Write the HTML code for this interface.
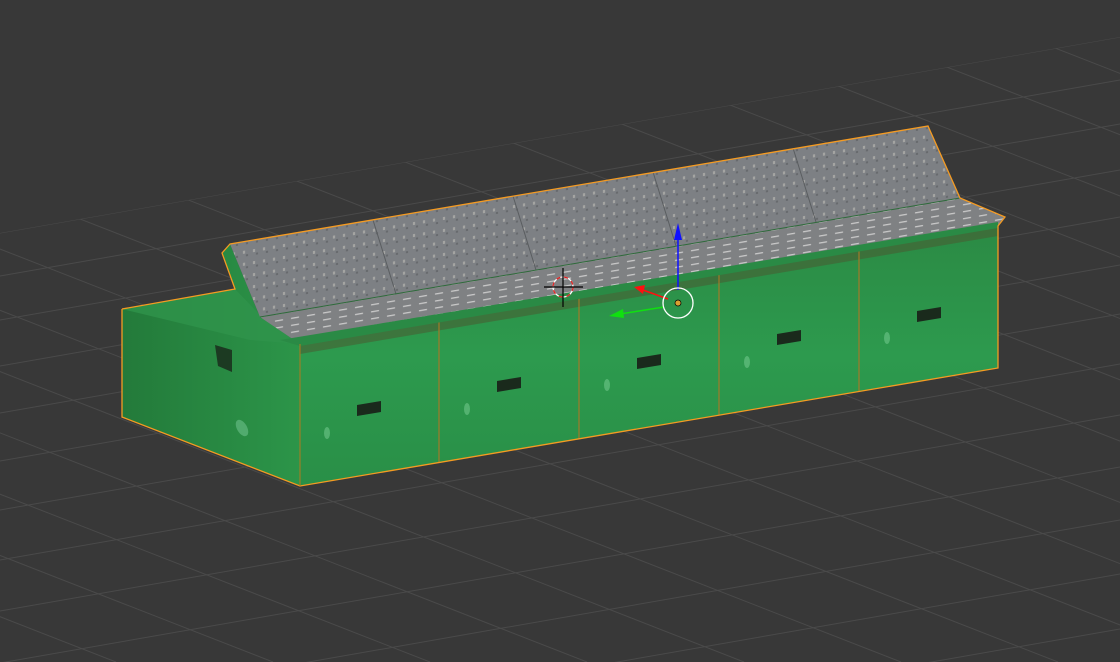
<!DOCTYPE html>
<html><head><style>
html,body{margin:0;padding:0;background:#383838;overflow:hidden;width:1120px;height:662px}
svg{display:block}
</style></head><body>
<svg width="1120" height="662" viewBox="0 0 1120 662" xmlns="http://www.w3.org/2000/svg">
<defs>
<linearGradient id="gf" x1="0" y1="0" x2="0" y2="1">
<stop offset="0" stop-color="#2b8a44"/><stop offset="0.5" stop-color="#2d9a4e"/><stop offset="1" stop-color="#298f47"/>
</linearGradient>
<linearGradient id="gl" x1="0" y1="0" x2="1" y2="0">
<stop offset="0" stop-color="#237a3a"/><stop offset="1" stop-color="#2c9549"/>
</linearGradient>
<pattern id="knobs" width="10" height="12" patternUnits="userSpaceOnUse" patternTransform="skewY(-9.6)">
<rect width="10" height="12" fill="#7d8084"/>
<rect x="3" y="4" width="2" height="3" fill="#a9a9a6"/>
<rect x="6" y="8" width="2" height="2" fill="#65686b"/>
</pattern>
<pattern id="keys" width="16" height="7" patternUnits="userSpaceOnUse" patternTransform="skewY(-9.6)">
<rect width="16" height="7" fill="#7f8183"/>
<rect x="3" y="3" width="8" height="1.3" fill="#c9c9c9"/>
</pattern>
<clipPath id="gc"><polygon points="0,233 1120,37 1120,662 0,662"/></clipPath>
</defs>
<rect width="1120" height="662" fill="#383838"/>
<g stroke="#4a4a4a" stroke-width="1" clip-path="url(#gc)">
<line x1="0" y1="233" x2="1120" y2="37"/>
<line x1="0" y1="276" x2="1120" y2="80"/>
<line x1="0" y1="320" x2="1120" y2="124"/>
<line x1="0" y1="366" x2="1120" y2="170"/>
<line x1="0" y1="413" x2="1120" y2="217"/>
<line x1="0" y1="461" x2="1120" y2="265"/>
<line x1="0" y1="510" x2="1120" y2="314"/>
<line x1="0" y1="560" x2="1120" y2="364"/>
<line x1="0" y1="611" x2="1120" y2="415"/>
<line x1="0" y1="663" x2="1120" y2="467"/>
<line x1="0" y1="716" x2="1120" y2="520"/>
<line x1="0" y1="770" x2="1120" y2="574"/>
<line x1="0" y1="825" x2="1120" y2="629"/>
<line x1="0" y1="880" x2="1120" y2="684"/>
<line x1="-1737" y1="0" x2="-41" y2="662"/>
<line x1="-1580" y1="0" x2="116" y2="662"/>
<line x1="-1423" y1="0" x2="273" y2="662"/>
<line x1="-1266" y1="0" x2="430" y2="662"/>
<line x1="-1109" y1="0" x2="587" y2="662"/>
<line x1="-952" y1="0" x2="744" y2="662"/>
<line x1="-795" y1="0" x2="901" y2="662"/>
<line x1="-638" y1="0" x2="1058" y2="662"/>
<line x1="-481" y1="0" x2="1215" y2="662"/>
<line x1="-324" y1="0" x2="1372" y2="662"/>
<line x1="-167" y1="0" x2="1529" y2="662"/>
<line x1="-10" y1="0" x2="1686" y2="662"/>
<line x1="147" y1="0" x2="1843" y2="662"/>
<line x1="304" y1="0" x2="2000" y2="662"/>
<line x1="461" y1="0" x2="2157" y2="662"/>
<line x1="618" y1="0" x2="2314" y2="662"/>
<line x1="775" y1="0" x2="2471" y2="662"/>
<line x1="932" y1="0" x2="2628" y2="662"/>
<line x1="1089" y1="0" x2="2785" y2="662"/>
</g>
<!-- left end face -->
<polygon points="122,309 235,289 222,253 230,244 260,317 300,344 300,486 122,417" fill="url(#gl)"/>
<polygon points="122,309 235,289 262,317 300,344 250,340" fill="#2f944b" opacity="0.8"/>
<polygon points="215,345 232,350 232,372 218,366" fill="#1c3a22"/>
<ellipse cx="242" cy="428" rx="5" ry="9" fill="#6cc08a" opacity="0.6" transform="rotate(-30 242 428)"/>
<!-- front face -->
<polygon points="300,344 998,226 998,368 300,486" fill="url(#gf)"/>
<polygon points="300,344 998,226 998,236 300,354" fill="#4a5a32" opacity="0.55"/>
<g stroke="#a07a2a" stroke-width="1.2">
<line x1="439" y1="321" x2="439" y2="462"/>
<line x1="579" y1="297" x2="579" y2="439"/>
<line x1="719" y1="273" x2="719" y2="415"/>
<line x1="859" y1="250" x2="859" y2="391"/>
</g>
<g fill="#1a2a1c">
<polygon points="357,405 381,401 381,412 357,416"/>
<polygon points="497,381 521,377 521,388 497,392"/>
<polygon points="637,358 661,354 661,365 637,369"/>
<polygon points="777,334 801,330 801,341 777,345"/>
<polygon points="917,311 941,307 941,318 917,322"/>
</g>
<g fill="#7ccf96" opacity="0.5">
<ellipse cx="327" cy="433" rx="3" ry="6"/><ellipse cx="467" cy="409" rx="3" ry="6"/><ellipse cx="607" cy="385" rx="3" ry="6"/><ellipse cx="747" cy="362" rx="3" ry="6"/><ellipse cx="887" cy="338" rx="3" ry="6"/>
</g>
<!-- keyboard strip -->
<polygon points="260,317 960,198 1005,217 998,226 300,344" fill="url(#keys)"/>
<polygon points="280,340 998,222 998,228 300,346" fill="#2a8a45"/>
<!-- upper panel -->
<polygon points="230,244 928,126 960,198 260,317" fill="url(#knobs)"/>
<g stroke="#5a5d60" stroke-width="1">
<line x1="373" y1="220" x2="396" y2="294"/>
<line x1="513" y1="196" x2="536" y2="270"/>
<line x1="653" y1="172" x2="676" y2="246"/>
<line x1="793" y1="148" x2="816" y2="222"/>
</g>
<line x1="260" y1="317" x2="960" y2="198" stroke="#2e6a3a" stroke-width="1"/>
<!-- outline -->
<polyline points="122,309 235,289 222,253 230,244 928,126 960,198 1005,217 998,226 998,368 300,486 122,417 122,309" fill="none" stroke="#f59b22" stroke-width="1.3"/>
<line x1="300" y1="344" x2="300" y2="486" stroke="#b07a20" stroke-width="1"/>
<!-- 3D cursor -->
<g>
<circle cx="563" cy="287" r="10" fill="none" stroke="#fff" stroke-width="1.3"/>
<circle cx="563" cy="287" r="10" fill="none" stroke="#e02020" stroke-width="1.3" stroke-dasharray="4 4"/>
<line x1="544" y1="287" x2="583" y2="287" stroke="#000" stroke-width="1.2"/>
<line x1="563" y1="268" x2="563" y2="307" stroke="#000" stroke-width="1.2"/>
</g>
<!-- gizmo -->
<line x1="678" y1="290" x2="678" y2="232" stroke="#1010ff" stroke-width="1.5"/>
<polygon points="678,223 674,240 682,240" fill="#1010ff"/>
<line x1="668" y1="299" x2="643" y2="290" stroke="#ff1010" stroke-width="1.5"/>
<polygon points="634,287 645,285 643,294" fill="#ff1010"/>
<line x1="664" y1="307" x2="620" y2="314" stroke="#10e010" stroke-width="1.5"/>
<polygon points="609,316 623,309 624,318" fill="#10e010"/>
<circle cx="678" cy="303" r="15" fill="none" stroke="#fff" stroke-width="1.3"/>
<circle cx="678" cy="303" r="3" fill="#d9a030" stroke="#000" stroke-width="0.7"/>
</svg>
</body></html>
